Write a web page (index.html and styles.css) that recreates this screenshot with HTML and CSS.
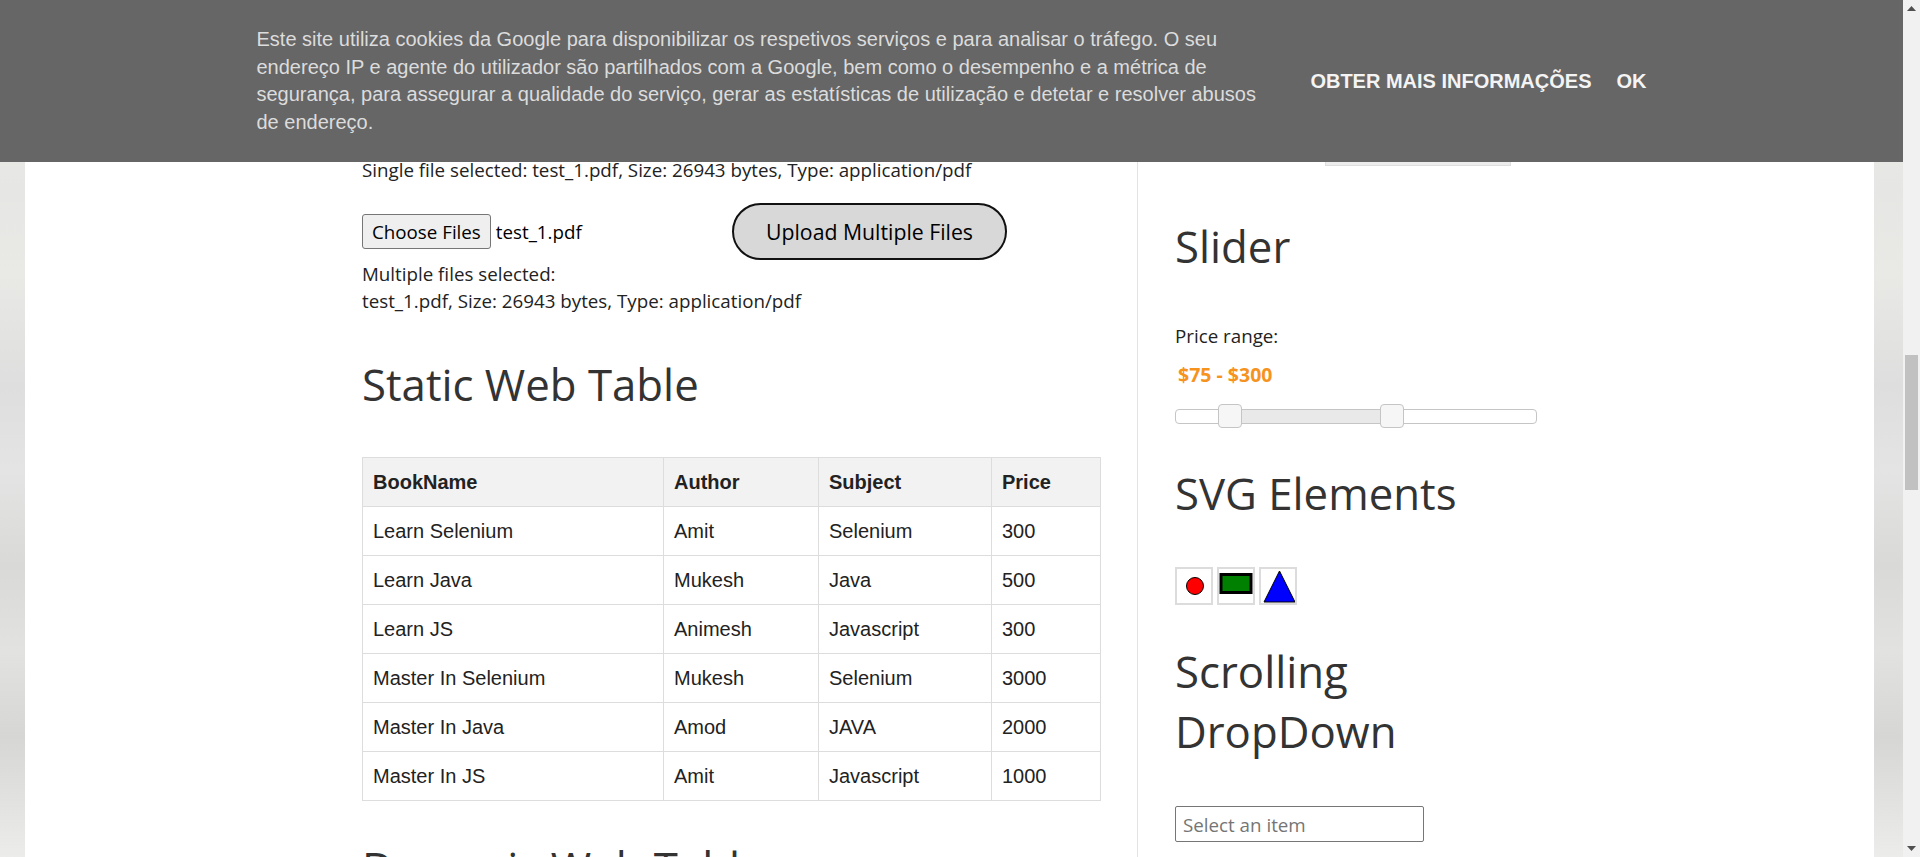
FILE: index.html
```html
<!DOCTYPE html>
<html lang="pt">
<head>
<meta charset="utf-8">
<title>Automation Testing Practice</title>
<link rel="stylesheet" href="styles.css">
</head>
<body>
<div class="window">
  <div class="viewport">
    <div class="page">
      <main class="main-col">
        <p class="line">Single file selected: test_1.pdf, Size: 26943 bytes, Type: application/pdf</p>
        <div class="upload-row">
          <div class="file-input">
            <button class="file-btn" type="button">Choose Files</button>
            <span class="file-name">test_1.pdf</span>
          </div>
          <button class="upload-btn" type="button">Upload Multiple Files</button>
        </div>
        <p class="line">Multiple files selected:<br>test_1.pdf, Size: 26943 bytes, Type: application/pdf</p>
        <h2 class="heading heading-table">Static Web Table</h2>
        <table class="book-table">
          <colgroup>
            <col class="c-book"><col class="c-author"><col class="c-subject"><col class="c-price">
          </colgroup>
          <thead>
            <tr><th>BookName</th><th>Author</th><th>Subject</th><th>Price</th></tr>
          </thead>
          <tbody>
            <tr><td>Learn Selenium</td><td>Amit</td><td>Selenium</td><td>300</td></tr>
            <tr><td>Learn Java</td><td>Mukesh</td><td>Java</td><td>500</td></tr>
            <tr><td>Learn JS</td><td>Animesh</td><td>Javascript</td><td>300</td></tr>
            <tr><td>Master In Selenium</td><td>Mukesh</td><td>Selenium</td><td>3000</td></tr>
            <tr><td>Master In Java</td><td>Amod</td><td>JAVA</td><td>2000</td></tr>
            <tr><td>Master In JS</td><td>Amit</td><td>Javascript</td><td>1000</td></tr>
          </tbody>
        </table>
        <h2 class="heading heading-dynamic">Dynamic Web Table</h2>
      </main>
      <aside class="sidebar">
        <div class="hidden-btn"></div>
        <h2 class="heading heading-slider">Slider</h2>
        <p class="line price-label">Price range:</p>
        <p class="price">$75 - $300</p>
        <div class="slider">
          <div class="slider-range" style="left:15%;width:45%"></div>
          <span class="slider-handle" style="left:15%"></span>
          <span class="slider-handle" style="left:60%"></span>
        </div>
        <h2 class="heading heading-svg">SVG Elements</h2>
        <div class="svg-row">
          <svg class="svg-box" width="34" height="34" viewBox="0 0 34 34">
            <circle cx="18" cy="17" r="8.5" fill="#ff0000" stroke="#000" stroke-width="1"/>
          </svg>
          <svg class="svg-box" width="34" height="34" viewBox="0 0 34 34">
            <rect x="2" y="5.5" width="30" height="18" fill="#008000" stroke="#000" stroke-width="3"/>
          </svg>
          <svg class="svg-box" width="34" height="34" viewBox="0 0 34 34">
            <polygon points="18.5,2 34,33 3,33" fill="#0000ff" stroke="#000" stroke-width="1"/>
          </svg>
        </div>
        <h2 class="heading heading-scroll">Scrolling DropDown</h2>
        <input class="combo" type="text" placeholder="Select an item">
      </aside>
    </div>
    <div class="cookie-bar">
      <div class="cookie-inner">
        <p class="cookie-text">Este site utiliza cookies da Google para disponibilizar os respetivos serviços e para analisar o tráfego. O seu endereço IP e agente do utilizador são partilhados com a Google, bem como o desempenho e a métrica de segurança, para assegurar a qualidade do serviço, gerar as estatísticas de utilização e detetar e resolver abusos de endereço.</p>
        <div class="cookie-actions">
          <a class="cookie-btn">Obter mais informações</a>
          <a class="cookie-btn">OK</a>
        </div>
      </div>
    </div>
  </div>
  <div class="scrollbar">
    <div class="sb-arrow">
      <svg width="9" height="5" viewBox="0 0 9 5"><polygon points="4.5,0 9,5 0,5" fill="#505050"/></svg>
    </div>
    <div class="sb-track"><div class="sb-thumb"></div></div>
    <div class="sb-arrow">
      <svg width="9" height="5" viewBox="0 0 9 5"><polygon points="0,0 9,0 4.5,5" fill="#505050"/></svg>
    </div>
  </div>
</div>
</body>
</html>
```

FILE: styles.css
```css
* {
  box-sizing: border-box;
}

html, body {
  margin: 0;
  padding: 0;
  width: 1920px;
  height: 857px;
  overflow: hidden;
}

body {
  font-family: "Open Sans", "Noto Sans", sans-serif;
  font-size: 18.75px;
  color: #222;
  background: #fff;
}

.window {
  display: flex;
  width: 1920px;
  height: 857px;
}

.viewport {
  position: relative;
  flex: 1;
  height: 857px;
  overflow: hidden;
  background: linear-gradient(180deg, #f1f1ed 0%, #ebebe8 12%, #e6e6e4 22%, #e9e9e6 32%, #dedede 45%, #e4e4e4 55%, #d9d9d7 66%, #e2e2e0 76%, #d6d6d4 86%, #ececea 100%);
}

.page {
  display: flex;
  margin: 0 29px 0 25px;
  min-height: 857px;
  background: #fff;
}

/* Main column */
.main-col {
  flex: 0 0 auto;
  width: 1112px;
  padding: 156px 37px 0 337px;
}

.line {
  margin: 0;
  line-height: 27px;
}

.upload-row {
  display: flex;
  align-items: center;
  height: 58px;
  margin-top: 19px;
}

.file-input {
  display: flex;
  align-items: center;
  width: 370px;
}

.file-btn {
  height: 35px;
  padding: 0 9px;
  font-family: "Open Sans", "Noto Sans", sans-serif;
  font-size: 18.75px;
  color: #000;
  background: #efefef;
  border: 1px solid #767676;
  border-radius: 3px;
}

.file-name {
  margin-left: 5px;
  color: #000;
}

.upload-btn {
  width: 275px;
  height: 57px;
  font-family: "Open Sans", "Noto Sans", sans-serif;
  font-size: 21.25px;
  color: #000;
  background: #d8d8d8;
  border: 2px solid #111;
  border-radius: 30px;
}

.heading {
  margin: 0;
  font-family: "Open Sans", "Noto Sans", sans-serif;
  font-size: 43.75px;
  font-weight: 400;
  line-height: 60px;
  color: #333;
}

.heading-table { margin-top: 40px; }
.heading-dynamic { margin-top: 36px; }

/* Table */
.book-table {
  width: 738px;
  margin-top: 43px;
  border-collapse: collapse;
  table-layout: fixed;
  font-family: "Liberation Sans", Arial, sans-serif;
  font-size: 20px;
  color: #222;
}

.c-book { width: 301px; }
.c-author { width: 155px; }
.c-subject { width: 173px; }
.c-price { width: 109px; }

.book-table th,
.book-table td {
  padding: 0 10px;
  line-height: 48px;
  text-align: left;
  border: 1px solid #ddd;
  white-space: nowrap;
}

.book-table th {
  font-weight: 700;
  background: #f2f2f2;
}

/* Sidebar */
.sidebar {
  flex: 0 0 auto;
  width: 408px;
  padding-left: 37px;
  border-left: 1px solid #e3e3e3;
}

.hidden-btn {
  width: 186px;
  height: 40px;
  margin: 126px 0 0 150px;
  background: #ececec;
  border: 1px solid #dedede;
}

.heading-slider { margin-top: 50px; }

.price-label {
  margin-top: 46px;
}

.price {
  margin: 12px 0 0 3px;
  font-size: 19.5px;
  font-weight: 700;
  line-height: 27px;
  color: #f6931f;
}

.slider {
  position: relative;
  width: 362px;
  height: 15px;
  margin-top: 21px;
  background: #fff;
  border: 1px solid #c5c5c5;
  border-radius: 4px;
}

.slider-range {
  position: absolute;
  top: 0;
  bottom: 0;
  background: #e9e9e9;
}

.slider-handle {
  position: absolute;
  top: -6px;
  width: 24px;
  height: 24px;
  margin-left: -12px;
  background: #f6f6f6;
  border: 1px solid #c5c5c5;
  border-radius: 4px;
}

.heading-svg { margin-top: 39px; }

.svg-row {
  display: flex;
  gap: 4px;
  margin-top: 44px;
}

.svg-box {
  display: block;
  width: 38px;
  height: 38px;
  border: 2px solid #dcdcdc;
  background: #fff;
}

.heading-scroll { margin-top: 36px; }

.combo {
  display: block;
  width: 249px;
  height: 36px;
  margin-top: 45px;
  padding: 0 7px;
  font-family: "Open Sans", "Noto Sans", sans-serif;
  font-size: 18.75px;
  color: #222;
  background: #fff;
  border: 1px solid #767676;
  border-radius: 2px;
}

.combo::placeholder {
  color: #757575;
}

/* Cookie bar overlay */
.cookie-bar {
  position: absolute;
  top: 0;
  left: 0;
  right: 0;
  z-index: 10;
  height: 162px;
  display: flex;
  align-items: center;
  justify-content: center;
  background: #666;
  font-family: "Liberation Sans", Arial, sans-serif;
  font-size: 20px;
}

.cookie-inner {
  display: flex;
  align-items: center;
  width: 1390px;
}

.cookie-text {
  width: 1016px;
  margin: 0;
  line-height: 27.5px;
  color: #dcdcdc;
}

.cookie-actions {
  display: flex;
  gap: 25px;
  margin-left: 38px;
}

.cookie-btn {
  font-weight: 700;
  text-transform: uppercase;
  color: #f4f4f4;
  white-space: nowrap;
}

/* Scrollbar */
.scrollbar {
  display: flex;
  flex-direction: column;
  width: 17px;
  height: 857px;
  background: #f1f1f1;
}

.sb-arrow {
  display: flex;
  align-items: center;
  justify-content: center;
  height: 17px;
}

.sb-track {
  flex: 1;
  padding: 0 2px;
}

.sb-thumb {
  height: 135px;
  margin-top: 338px;
  background: #c1c1c1;
}
```
